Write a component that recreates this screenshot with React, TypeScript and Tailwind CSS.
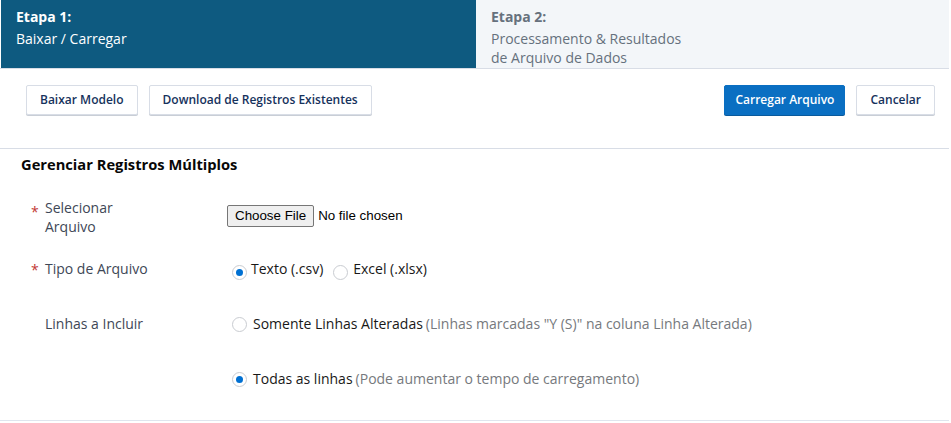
import { useState } from 'react';

// ── Small pieces ──────────────────────────────────────────────────────────────

function Radio({ checked, onClick }: { checked: boolean; onClick?: () => void }) {
  return (
    <span
      onClick={onClick}
      className="w-[15px] h-[15px] rounded-full border border-[#c9ccd1] bg-white flex items-center justify-center shrink-0 cursor-pointer"
    >
      {checked && <span className="w-[7px] h-[7px] rounded-full bg-[#0070d2]" />}
    </span>
  );
}

function Btn({ children, primary }: { children: React.ReactNode; primary?: boolean }) {
  return (
    <button
      className={
        primary
          ? 'h-[30px] px-[10px] rounded-[2px] bg-[#0a6fc2] border border-[#0a6fc2] text-white text-[12px] font-semibold shadow-[0_1px_0_#0a5a9c]'
          : 'h-[30px] px-[13px] rounded-[2px] bg-white border border-[#d8dde6] text-[#16325c] text-[12px] font-semibold shadow-[0_1px_0_#c9ced6]'
      }
    >
      {children}
    </button>
  );
}

// ── Main ──────────────────────────────────────────────────────────────────────

export default function App() {
  const [tipo, setTipo]     = useState<'csv' | 'xlsx'>('csv');
  const [linhas, setLinhas] = useState<'alteradas' | 'todas'>('todas');

  return (
    <div className="w-[951px] h-[423px] bg-white font-['Open_Sans',sans-serif] text-[14px] overflow-hidden">
      <div className="w-[949px]">

        {/* ── Steps ── */}
        <div className="flex h-[69px] border-b border-[#d8dde6]">
          <div className="w-[475px] bg-[#0e5a80] text-white pl-[15px] pt-[7px] ml-[1px]">
            <p className="font-bold leading-[20px] mb-[2px]">Etapa 1:</p>
            <p className="leading-[19px]">Baixar / Carregar</p>
          </div>
          <div className="flex-1 bg-[#f3f6f9] text-[#66717d] pl-[15px] pt-[7px]">
            <p className="font-bold leading-[20px] mb-[2px]">Etapa 2:</p>
            <p className="leading-[19px]">Processamento &amp; Resultados<br />de Arquivo de Dados</p>
          </div>
        </div>

        {/* ── Actions ── */}
        <div className="flex items-center pt-[16px] pl-[26px] pr-[14px]">
          <div className="flex gap-[11px]">
            <Btn>Baixar Modelo</Btn>
            <Btn>Download de Registros Existentes</Btn>
          </div>
          <div className="flex gap-[11px] ml-auto">
            <Btn primary>Carregar Arquivo</Btn>
            <Btn>Cancelar</Btn>
          </div>
        </div>

        <div className="mt-[33px] border-t border-[#d8dde6]" />

        {/* ── Form ── */}
        <div className="pl-[21px] pt-[4px]">
          <h3 className="text-[14.7px] font-bold text-[#080707] leading-[20px] pt-[1px]">Gerenciar Registros Múltiplos</h3>

          <div className="mt-[24px] flex">
            <div className="w-[206px] flex pl-[10px] text-[#3e4756]">
              <span className="w-[14px] text-[#c23934] mt-[3px]">*</span>
              <span className="w-[100px] leading-[19px]">Selecionar Arquivo</span>
            </div>
            <input
              type="file"
              className="self-start mt-[7px] font-['Liberation_Sans',Arial,sans-serif] text-[13.33px] text-black file:mr-[4px] file:px-[7px] file:h-[22px] file:border file:border-[#767676] file:rounded-[2px] file:bg-[#efefef] file:text-black"
            />
          </div>

          <div className="mt-[24px] flex items-center h-[19px]">
            <div className="w-[206px] flex pl-[10px] text-[#3e4756]">
              <span className="w-[14px] text-[#c23934]">*</span>
              <span className="leading-[19px]">Tipo de Arquivo</span>
            </div>
            <div className="flex items-center text-[#181818] pl-[5px]">
              <span className="mt-[5px]"><Radio checked={tipo === 'csv'} onClick={() => setTipo('csv')} /></span>
              <span className="ml-[4px] mr-[10px] -mt-[2px]">Texto (.csv)</span>
              <span className="mt-[5px]"><Radio checked={tipo === 'xlsx'} onClick={() => setTipo('xlsx')} /></span>
              <span className="ml-[5px] -mt-[2px]">Excel (.xlsx)</span>
            </div>
          </div>

          <div className="mt-[35px] flex items-center h-[19px]">
            <div className="w-[206px] pl-[24px] text-[#3e4756] leading-[19px]">Linhas a Incluir</div>
            <div className="flex items-center pl-[5px]">
              <span className="mt-[1px]"><Radio checked={linhas === 'alteradas'} onClick={() => setLinhas('alteradas')} /></span>
              <span className="ml-[6px] text-[#181818]">Somente Linhas Alteradas</span>
              <span className="ml-[3px] text-[#76797d]">(Linhas marcadas "Y (S)" na coluna Linha Alterada)</span>
            </div>
          </div>

          <div className="mt-[36px] flex items-center h-[19px]">
            <div className="w-[206px]" />
            <div className="flex items-center pl-[5px]">
              <span className="mt-[1px]"><Radio checked={linhas === 'todas'} onClick={() => setLinhas('todas')} /></span>
              <span className="ml-[6px] text-[#181818]">Todas as linhas</span>
              <span className="ml-[3px] text-[#76797d]">(Pode aumentar o tempo de carregamento)</span>
            </div>
          </div>
        </div>

        <div className="mt-[32px] border-t border-[#dfe5ee]" />
      </div>
    </div>
  );
}
